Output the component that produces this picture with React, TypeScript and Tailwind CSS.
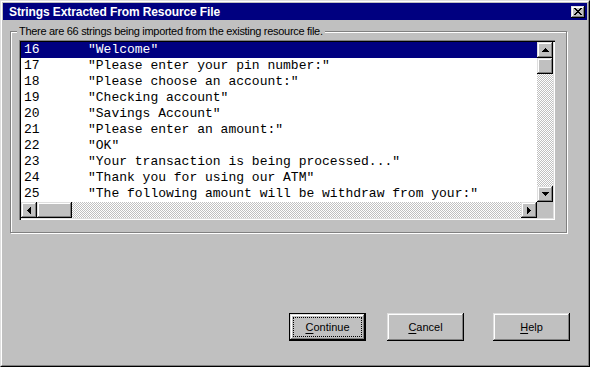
import React from "react";

const rows: [string, string][] = [
  ["16", '"Welcome"'],
  ["17", '"Please enter your pin number:"'],
  ["18", '"Please choose an account:"'],
  ["19", '"Checking account"'],
  ["20", '"Savings Account"'],
  ["21", '"Please enter an amount:"'],
  ["22", '"OK"'],
  ["23", '"Your transaction is being processed..."'],
  ["24", '"Thank you for using our ATM"'],
  ["25", '"The following amount will be withdraw from your:"'],
];

const raised =
  "bg-[#c0c0c0] shadow-[inset_-1px_-1px_#000,inset_1px_1px_#dfdfdf,inset_-2px_-2px_#808080,inset_2px_2px_#fff]";

function Arrow({ dir }: { dir: "up" | "down" | "left" | "right" }) {
  const rects: React.ReactNode[] = [];
  for (let i = 0; i < 4; i++) {
    const len = 1 + i * 2;
    const off = 3 - i;
    if (dir === "up") rects.push(<rect key={i} x={off} y={i} width={len} height={1} />);
    if (dir === "down") rects.push(<rect key={i} x={off} y={3 - i} width={len} height={1} />);
    if (dir === "left") rects.push(<rect key={i} x={i} y={off} width={1} height={len} />);
    if (dir === "right") rects.push(<rect key={i} x={3 - i} y={off} width={1} height={len} />);
  }
  const horiz = dir === "up" || dir === "down";
  return (
    <svg
      width={horiz ? 7 : 4}
      height={horiz ? 4 : 7}
      viewBox={horiz ? "0 0 7 4" : "0 0 4 7"}
      shapeRendering="crispEdges"
      fill="#000"
    >
      {rects}
    </svg>
  );
}

function ScrollBtn({ dir }: { dir: "up" | "down" | "left" | "right" }) {
  return (
    <div className={`w-[16px] h-[16px] flex items-center justify-center ${raised}`}>
      <Arrow dir={dir} />
    </div>
  );
}

function CloseGlyph() {
  const px: [number, number][] = [];
  const pattern = [
    "XX....XX",
    ".XX..XX.",
    "..XXXX..",
    "...XX...",
    "..XXXX..",
    ".XX..XX.",
    "XX....XX",
  ];
  pattern.forEach((r, y) =>
    r.split("").forEach((c, x) => {
      if (c === "X") px.push([x, y]);
    })
  );
  return (
    <svg width={8} height={7} viewBox="0 0 8 7" shapeRendering="crispEdges" fill="#000">
      {px.map(([x, y]) => (
        <rect key={`${x}-${y}`} x={x} y={y} width={1} height={1} />
      ))}
    </svg>
  );
}

function Button({ label, def }: { label: string; def?: boolean }) {
  const first = label[0];
  const rest = label.slice(1);
  return (
    <div
      className={`relative w-[77px] h-[28px] flex items-center justify-center ${
        def ? "border border-black" : ""
      }`}
    >
      <div
        className={`absolute ${def ? "inset-0" : "inset-0"} ${raised}`}
      />
      {def && <div className="absolute inset-[3px] border border-dotted border-black" />}
      <span className="relative text-[11px] text-black leading-none">
        <span className="underline underline-offset-[2px]">{first}</span>
        {rest}
      </span>
    </div>
  );
}

export default function App() {
  return (
    <div
      className="w-[590px] h-[367px] bg-[#c0c0c0] border border-t-[#dfdfdf] border-l-[#dfdfdf] border-r-black border-b-black overflow-hidden"
      style={{ fontFamily: '"Liberation Sans", Arial, sans-serif' }}
    >
      <div className="w-full h-full border border-t-white border-l-white border-r-[#808080] border-b-[#808080] p-px flex flex-col">
        {/* Title bar */}
        <div className="h-[17px] bg-[#000080] flex items-center justify-between pl-[6px] pr-[2px] shrink-0">
          <span className="text-white font-bold text-[12px] leading-none tracking-[-0.1px]">
            Strings Extracted From Resource File
          </span>
          <div className={`w-[14px] h-[12px] flex items-center justify-center ${raised}`}>
            <CloseGlyph />
          </div>
        </div>

        {/* Group box */}
        <div className="relative ml-[7px] mt-[11px] w-[557px] h-[202px] border border-[#808080] shadow-[inset_1px_1px_#fff,1px_1px_#fff] shrink-0">
          <span className="absolute left-[6px] top-[-7px] bg-[#c0c0c0] px-[2px] text-[11px] leading-[13px] text-black tracking-[-0.3px]">
            There are 66 strings being imported from the existing resource file.
          </span>

          {/* Listbox */}
          <div className="ml-[8px] mt-[8px] w-[536px] h-[180px] p-[2px] bg-white shadow-[inset_1px_1px_#808080,inset_2px_2px_#000,inset_-1px_-1px_#fff,inset_-2px_-2px_#dfdfdf]">
            <div className="grid grid-cols-[516px_16px] grid-rows-[160px_16px] w-[532px] h-[176px]">
              <div
                className="bg-white overflow-hidden text-[13px]"
                style={{ fontFamily: '"Liberation Mono", "Courier New", monospace' }}
              >
                {rows.map(([n, s], i) => (
                  <div
                    key={n}
                    className={`h-[16px] leading-[16px] pl-[3px] flex whitespace-pre ${
                      i === 0 ? "bg-[#000080] text-white" : "text-black"
                    }`}
                  >
                    <span className="w-[64px] shrink-0">{n}</span>
                    <span>{s}</span>
                  </div>
                ))}
              </div>
              {/* vertical scrollbar */}
              <div className="flex flex-col">
                <ScrollBtn dir="up" />
                <div className={`w-[16px] h-[16px] ${raised}`} />
                <div className="flex-1 bg-[repeating-conic-gradient(#fff_0_25%,#c0c0c0_0_50%)] bg-[length:2px_2px]" />
                <ScrollBtn dir="down" />
              </div>
              {/* horizontal scrollbar */}
              <div className="flex">
                <ScrollBtn dir="left" />
                <div className={`w-[35px] h-[16px] ${raised}`} />
                <div className="flex-1 bg-[repeating-conic-gradient(#fff_0_25%,#c0c0c0_0_50%)] bg-[length:2px_2px]" />
                <ScrollBtn dir="right" />
              </div>
              <div className="bg-[#c0c0c0]" />
            </div>
          </div>
        </div>

        {/* Buttons */}
        <div className="flex justify-end items-end pr-[17px] mt-[80px]">
          <Button label="Continue" def />
          <div className="ml-[21px]">
            <Button label="Cancel" />
          </div>
          <div className="ml-[29px]">
            <Button label="Help" />
          </div>
        </div>
      </div>
    </div>
  );
}
